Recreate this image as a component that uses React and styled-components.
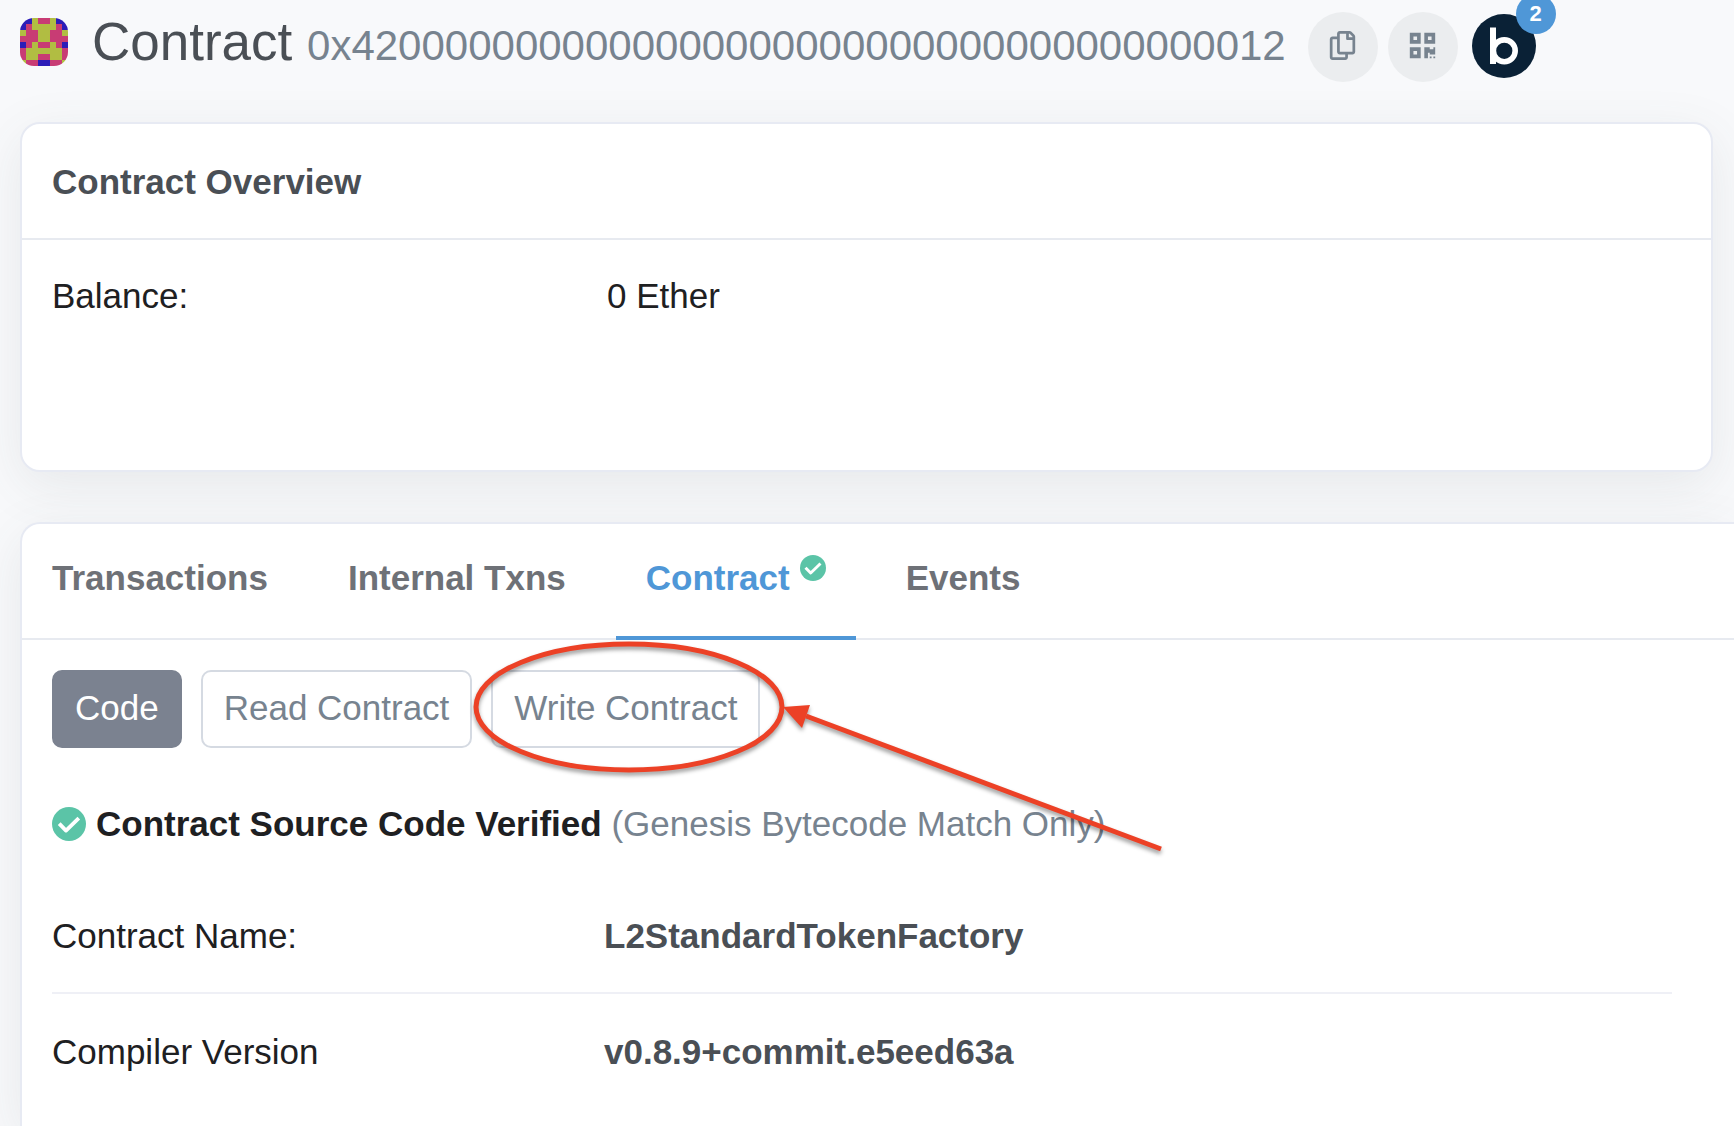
import React from "react";
import styled, { createGlobalStyle } from "styled-components";
import { FaRegCopy, FaQrcode } from "react-icons/fa";

const GlobalStyle = createGlobalStyle`
  *, *::before, *::after { box-sizing: border-box; }
  body {
    margin: 0;
    background: #f8f9fb;
    color: #1e2022;
    font-family: "Liberation Sans", Arial, Helvetica, sans-serif;
    font-size: 35px;
    line-height: 52px;
  }
`;

const Page = styled.div`
  display: flex;
  flex-direction: column;
  min-height: 100vh;
  padding-left: 20px;
  overflow: hidden;
`;

const Header = styled.header`
  display: flex;
  align-items: flex-start;
  gap: 22px;
  padding: 12px 0 40px;
`;

const Identity = styled.div`
  display: flex;
  align-items: center;
  gap: 24px;
`;

const Avatar = styled.svg`
  flex: none;
  width: 48px;
  height: 48px;
  border-radius: 14px;
`;

const Title = styled.h1`
  margin: 0;
  color: #4a4f55;
  font-size: 53px;
  font-weight: 400;
  line-height: 60px;
  white-space: nowrap;
`;

const Address = styled.span`
  color: #77838f;
  font-size: 42px;
  line-height: 42px;
`;

const Actions = styled.div`
  display: flex;
  align-items: center;
  gap: 10px;
`;

const RoundButton = styled.button`
  display: flex;
  align-items: center;
  justify-content: center;
  width: 70px;
  height: 70px;
  padding: 0 0 3px;
  border: 0;
  border-radius: 50%;
  background: #ebedef;
  color: #77838f;
  font-size: 29px;
`;

const Sponsor = styled.a`
  position: relative;
  display: block;
  width: 64px;
  height: 64px;
  margin: 0 0 2px 4px;
`;

const Badge = styled.span`
  position: absolute;
  top: -20px;
  right: -20px;
  width: 40px;
  height: 40px;
  border-radius: 50%;
  background: #4f97d7;
  color: #fff;
  font-size: 22px;
  font-weight: 700;
  line-height: 40px;
  text-align: center;
`;

const Card = styled.section`
  border: 2px solid #e7eaf3;
  border-radius: 20px;
  background: #fff;
  box-shadow: 0 14px 52px rgba(82, 85, 92, 0.1);
`;

const OverviewCard = styled(Card)`
  min-height: 350px;
  margin: 0 21px 50px 0;
`;

const DetailCard = styled(Card)`
  flex: 1;
  border-width: 2px 0 0 2px;
  border-radius: 20px 0 0 0;
`;

const CardHeader = styled.div`
  padding: 32px 30px 30px;
  border-bottom: 2px solid #e7eaf0;
`;

const CardTitle = styled.h2`
  margin: 0;
  color: #4a4f55;
  font-size: 35px;
  font-weight: 700;
`;

const CardBody = styled.div`
  padding: 30px;
`;

const DetailBody = styled.div`
  padding: 30px 62px 18px 30px;
`;

const Facts = styled.dl`
  margin: 0;
`;

const Fact = styled.div`
  display: grid;
  grid-template-columns: 1fr 2fr;
  column-gap: 18px;
  padding: ${(p) => (p.$ruled ? "32px 0 30px" : "0")};

  & + & {
    border-top: 2px solid #eff0f6;
  }
`;

const Value = styled.dd`
  margin: 0;
  color: ${(p) => (p.$strong ? "#4a4f55" : "inherit")};
  font-weight: ${(p) => (p.$strong ? 700 : 400)};
`;

const Tabs = styled.nav`
  display: flex;
  gap: 20px;
  box-shadow: inset 0 -2px #e7eaf0;
`;

const Tab = styled.a`
  display: flex;
  gap: 10px;
  padding: 28px 30px 32px;
  border-bottom: 4px solid ${(p) => (p.$active ? "#4f97d7" : "transparent")};
  color: ${(p) => (p.$active ? "#4f97d7" : "#6e7177")};
  font-weight: 700;
  text-decoration: none;
  white-space: nowrap;
`;

const TabCheck = styled.span`
  display: flex;
  padding-top: 3px;
`;

const CheckSvg = styled.svg`
  flex: none;
  display: block;
  width: ${(p) => p.$size}px;
  height: ${(p) => p.$size}px;
`;

const Modes = styled.div`
  display: flex;
  gap: 19px;
`;

const ModeButton = styled.button`
  padding: 10px 21px 12px;
  border: 2px solid ${(p) => (p.$active ? "#7b8290" : "#d5dae2")};
  border-radius: 10px;
  background: ${(p) => (p.$active ? "#7b8290" : "#fff")};
  color: ${(p) => (p.$active ? "#fff" : "#77838f")};
  font: inherit;
  white-space: nowrap;
`;

const Highlighted = styled.div`
  position: relative;
`;

const Markup = styled.svg`
  position: absolute;
  top: -40px;
  left: -30px;
  width: 720px;
  height: 240px;
  pointer-events: none;
  filter: drop-shadow(0 3px 2px rgba(0, 0, 0, 0.4));
`;

const Verified = styled.p`
  display: flex;
  align-items: center;
  gap: 10px;
  margin: 50px 0 28px;
`;

const Muted = styled.span`
  color: #77838f;
`;

const CELLS = [
  "bbyppybb",
  "bpyyyypb",
  "yppyyppy",
  "pppyyppp",
  "bpyppypb",
  "pyyyyyyp",
  "pyyppyyp",
  "yppbbppy",
];
const CELL_COLORS = { y: "#b1bd42", p: "#c83c74", b: "#2c1db8" };

function Blockie() {
  return (
    <Avatar viewBox="0 0 8 8" shapeRendering="crispEdges" aria-hidden="true">
      {CELLS.map((row, y) =>
        [...row].map((c, x) => (
          <rect key={`${x}-${y}`} x={x} y={y} width="1" height="1" fill={CELL_COLORS[c]} />
        ))
      )}
    </Avatar>
  );
}

function Check({ size }) {
  return (
    <CheckSvg $size={size} viewBox="0 0 34 34" aria-hidden="true">
      <circle cx="17" cy="17" r="17" fill="#5bc4a7" />
      <path
        d="M7.2 16.6L14 23.6L26.8 11.2"
        fill="none"
        stroke="#fff"
        strokeWidth="3.8"
        strokeLinejoin="round"
      />
    </CheckSvg>
  );
}

function SponsorLogo() {
  return (
    <svg width="64" height="64" viewBox="0 0 64 64" aria-hidden="true">
      <circle cx="32" cy="32" r="32" fill="#0a2136" />
      <rect x="18" y="13.5" width="6" height="36.5" fill="#fff" />
      <circle cx="32.3" cy="36.8" r="10.9" fill="none" stroke="#fff" strokeWidth="5.6" />
    </svg>
  );
}

function Pointer() {
  return (
    <Markup viewBox="0 0 720 240" aria-hidden="true">
      <ellipse cx="168" cy="77" rx="153" ry="63" fill="none" stroke="#ec4126" strokeWidth="5" />
      <path d="M345 86L700 219" stroke="#ec4126" strokeWidth="5" />
      <path d="M322 77L349 75L341 98Z" fill="#ec4126" />
    </Markup>
  );
}

export default function App() {
  return (
    <Page>
      <GlobalStyle />
      <Header>
        <Identity>
          <Blockie />
          <Title>
            Contract <Address>0x4200000000000000000000000000000000000012</Address>
          </Title>
        </Identity>
        <Actions>
          <RoundButton type="button" aria-label="Copy address">
            <FaRegCopy />
          </RoundButton>
          <RoundButton type="button" aria-label="Show QR code">
            <FaQrcode />
          </RoundButton>
          <Sponsor href="#sponsor" aria-label="Sponsor">
            <SponsorLogo />
            <Badge>2</Badge>
          </Sponsor>
        </Actions>
      </Header>

      <OverviewCard>
        <CardHeader>
          <CardTitle>Contract Overview</CardTitle>
        </CardHeader>
        <CardBody>
          <Facts>
            <Fact>
              <dt>Balance:</dt>
              <Value>0 Ether</Value>
            </Fact>
          </Facts>
        </CardBody>
      </OverviewCard>

      <DetailCard>
        <Tabs>
          <Tab href="#transactions">Transactions</Tab>
          <Tab href="#internal">Internal Txns</Tab>
          <Tab href="#contract" $active aria-current="page">
            Contract
            <TabCheck>
              <Check size={26} />
            </TabCheck>
          </Tab>
          <Tab href="#events">Events</Tab>
        </Tabs>
        <DetailBody>
          <Modes>
            <ModeButton type="button" $active>
              Code
            </ModeButton>
            <ModeButton type="button">Read Contract</ModeButton>
            <Highlighted>
              <ModeButton type="button">Write Contract</ModeButton>
              <Pointer />
            </Highlighted>
          </Modes>
          <Verified>
            <Check size={34} />
            <span>
              <strong>Contract Source Code Verified</strong>{" "}
              <Muted>(Genesis Bytecode Match Only)</Muted>
            </span>
          </Verified>
          <Facts>
            <Fact $ruled>
              <dt>Contract Name:</dt>
              <Value $strong>L2StandardTokenFactory</Value>
            </Fact>
            <Fact $ruled>
              <dt>Compiler Version</dt>
              <Value $strong>v0.8.9+commit.e5eed63a</Value>
            </Fact>
          </Facts>
        </DetailBody>
      </DetailCard>
    </Page>
  );
}
